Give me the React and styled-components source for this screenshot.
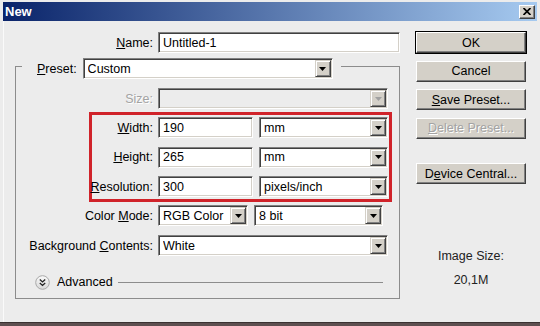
import React from "react";
import styled, { createGlobalStyle } from "styled-components";

const GlobalStyle = createGlobalStyle`
  html, body {
    margin: 0;
    padding: 0;
    background: #ececec;
  }
  body {
    font-family: "Liberation Sans", Arial, sans-serif;
    font-size: 12.5px;
    color: #000;
  }
`;

const Window = styled.div`
  width: 540px;
  height: 326px;
  box-sizing: border-box;
  display: flex;
  flex-direction: column;
  padding: 2px 3px 0 3px;
  background: #ececec;
  overflow: hidden;
`;

const TitleBar = styled.div`
  height: 19px;
  flex: none;
  display: flex;
  align-items: center;
  justify-content: space-between;
  padding: 0 2px;
  background: linear-gradient(90deg, #0a246a 0%, #a6caf0 100%);
`;

const Title = styled.span`
  color: #fff;
  font-weight: bold;
  font-size: 13px;
`;

const CloseButton = styled.div`
  box-sizing: border-box;
  width: 16px;
  height: 14px;
  display: grid;
  place-items: center;
  background: #d4d0c8;
  border: 1px solid;
  border-color: #fff #404040 #404040 #fff;
  box-shadow: inset -1px -1px 0 #808080;
`;

const Body = styled.div`
  flex: 1;
  display: flex;
  padding: 11px 0 0 11px;
  border-left: 1px solid #fafafa;
`;

const FormColumn = styled.div`
  width: 385px;
  flex: none;
  display: flex;
  flex-direction: column;
`;

const Row = styled.div`
  display: flex;
  align-items: center;
  gap: 5px;
  height: 21px;
  margin-top: ${(p) => p.$mt || 0}px;
`;

const Fields = styled.div`
  display: flex;
  gap: 6px;
`;

const Label = styled.div`
  width: ${(p) => p.$w}px;
  flex: none;
  display: flex;
  justify-content: flex-end;
  white-space: nowrap;
  color: ${(p) => (p.$disabled ? "#a3a3a3" : "#000")};
  text-shadow: ${(p) => (p.$disabled ? "1px 1px 0 #fff" : "none")};
`;

const U = styled.span`
  text-decoration: underline;
  text-underline-offset: 1px;
`;

const FieldBox = styled.div`
  box-sizing: border-box;
  width: ${(p) => p.$w}px;
  height: 21px;
  flex: none;
  display: flex;
  align-items: center;
  padding: 1px 1px 1px 4px;
  background: ${(p) => (p.$disabled ? "#ececec" : "#fff")};
  border: 1px solid;
  border-color: #808080 #fff #fff #808080;
  box-shadow: inset 1px 1px 0 #404040, inset -1px -1px 0 #d4d0c8;
`;

const FieldText = styled.span`
  flex: 1;
  overflow: hidden;
  white-space: nowrap;
`;

const DropButton = styled.div`
  box-sizing: border-box;
  width: 16px;
  height: 17px;
  flex: none;
  display: grid;
  place-items: center;
  background: #d4d0c8;
  border: 1px solid;
  border-color: #d4d0c8 #404040 #404040 #d4d0c8;
  box-shadow: inset 1px 1px 0 #fff, inset -1px -1px 0 #808080;
`;

const Group = styled.fieldset`
  margin: 0;
  padding: 9px 10px 8px 0;
  min-width: 0;
  border: 1px solid #8c8c8c;
  display: flex;
  flex-direction: column;
`;

const Legend = styled.legend`
  margin-left: 6px;
  padding: 5px 8px 0 15px;
`;

const LegendInner = styled.div`
  display: flex;
  align-items: center;
  gap: 6px;
`;

const Highlight = styled.div`
  margin: 3px -3px 3px 73px;
  padding: 2px 0;
  border: 3px solid #d0232a;
  display: flex;
  flex-direction: column;
  gap: 8.5px;
`;

const AdvancedRow = styled.div`
  display: flex;
  align-items: center;
  height: 16px;
  gap: 7px;
  margin: 18px 6px 0 19px;
`;

const Rule = styled.div`
  flex: 1;
  height: 1px;
  margin-left: -2px;
  background: #8c8c8c;
`;

const ButtonColumn = styled.div`
  width: 110px;
  flex: none;
  margin-left: 16px;
  display: flex;
  flex-direction: column;
  gap: 7.5px;
`;

const Button = styled.div`
  box-sizing: border-box;
  height: 21px;
  margin-top: ${(p) => p.$mt || 0}px;
  display: flex;
  align-items: center;
  justify-content: center;
  white-space: nowrap;
  background: #d4d0c8;
  border: 1px solid;
  border-color: #fff #404040 #404040 #fff;
  box-shadow: ${(p) =>
    p.$default
      ? "0 0 0 1px #000, inset -1px -1px 0 #808080"
      : "inset -1px -1px 0 #808080"};
  color: ${(p) => (p.$disabled ? "#a3a3a3" : "#000")};
  text-shadow: ${(p) => (p.$disabled ? "1px 1px 0 #fff" : "none")};
`;

const ImageInfo = styled.div`
  margin-top: 57.5px;
  display: flex;
  flex-direction: column;
  align-items: center;
  gap: 9px;
  line-height: 15px;
  color: #222;
`;

const BottomStrip = styled.div`
  height: 4px;
  flex: none;
  margin: 0 -3px;
  background: linear-gradient(180deg, #3a3131 0, #3a3131 1px, #5e4f50 1px);
`;

function Arrow({ disabled }) {
  return (
    <svg width="7" height="4" viewBox="0 0 7 4">
      <polygon points="0,0 7,0 3.5,4" fill={disabled ? "#a0a0a0" : "#000"} />
    </svg>
  );
}

function Select({ w, value, disabled }) {
  return (
    <FieldBox $w={w} $disabled={disabled}>
      <FieldText>{value}</FieldText>
      <DropButton>
        <Arrow disabled={disabled} />
      </DropButton>
    </FieldBox>
  );
}

function TextInput({ w, value }) {
  return (
    <FieldBox $w={w}>
      <FieldText>{value}</FieldText>
    </FieldBox>
  );
}

function FieldLabel({ w, disabled, children }) {
  return (
    <Label $w={w} $disabled={disabled}>
      <span>{children}</span>
    </Label>
  );
}

function ExpandIcon() {
  return (
    <svg width="15" height="15" viewBox="0 0 15 15">
      <defs>
        <linearGradient id="adv" x1="0" y1="0" x2="0" y2="1">
          <stop offset="0" stopColor="#fafafa" />
          <stop offset="1" stopColor="#d8d8d8" />
        </linearGradient>
      </defs>
      <circle cx="7.5" cy="7.5" r="6.8" fill="url(#adv)" stroke="#a8a8a8" />
      <path
        d="M4.8 4.6 L7.5 7 L10.2 4.6 M4.8 8 L7.5 10.4 L10.2 8"
        fill="none"
        stroke="#222"
        strokeWidth="1.3"
      />
    </svg>
  );
}

function CloseGlyph() {
  return (
    <svg width="8" height="7" viewBox="0 0 8 7">
      <path d="M0.5 0 L7.5 7 M7.5 0 L0.5 7" stroke="#000" strokeWidth="1.7" />
    </svg>
  );
}

export default function App() {
  return (
    <>
      <GlobalStyle />
      <Window>
        <TitleBar>
          <Title>New</Title>
          <CloseButton>
            <CloseGlyph />
          </CloseButton>
        </TitleBar>
        <Body>
          <FormColumn>
            <Row>
              <FieldLabel w={138}>
                <U>N</U>ame:
              </FieldLabel>
              <TextInput w={242} value="Untitled-1" />
            </Row>
            <Group>
              <Legend>
                <LegendInner>
                  <span>
                    <U>P</U>reset:
                  </span>
                  <Select w={250} value="Custom" />
                </LegendInner>
              </Legend>
              <Row>
                <FieldLabel w={137} disabled>
                  Size:
                </FieldLabel>
                <Select w={230} value="" disabled />
              </Row>
              <Highlight>
                <Row>
                  <FieldLabel w={61}>
                    <U>W</U>idth:
                  </FieldLabel>
                  <Fields>
                    <TextInput w={95} value="190" />
                    <Select w={129} value="mm" />
                  </Fields>
                </Row>
                <Row>
                  <FieldLabel w={61}>
                    <U>H</U>eight:
                  </FieldLabel>
                  <Fields>
                    <TextInput w={95} value="265" />
                    <Select w={129} value="mm" />
                  </Fields>
                </Row>
                <Row>
                  <FieldLabel w={61}>
                    <U>R</U>esolution:
                  </FieldLabel>
                  <Fields>
                    <TextInput w={95} value="300" />
                    <Select w={129} value="pixels/inch" />
                  </Fields>
                </Row>
              </Highlight>
              <Row>
                <FieldLabel w={137}>
                  Color <U>M</U>ode:
                </FieldLabel>
                <Fields>
                  <Select w={90} value="RGB Color" />
                  <Select w={129} value="8 bit" />
                </Fields>
              </Row>
              <Row $mt={9}>
                <FieldLabel w={137}>
                  Background <U>C</U>ontents:
                </FieldLabel>
                <Select w={230} value="White" />
              </Row>
              <AdvancedRow>
                <ExpandIcon />
                <span>Advanced</span>
                <Rule />
              </AdvancedRow>
            </Group>
          </FormColumn>
          <ButtonColumn>
            <Button $default>OK</Button>
            <Button>Cancel</Button>
            <Button>
              <span>
                <U>S</U>ave Preset...
              </span>
            </Button>
            <Button $disabled>
              <span>
                <U>D</U>elete Preset...
              </span>
            </Button>
            <Button $mt={17}>
              <span>
                D<U>e</U>vice Central...
              </span>
            </Button>
            <ImageInfo>
              <span>Image Size:</span>
              <span>20,1M</span>
            </ImageInfo>
          </ButtonColumn>
        </Body>
        <BottomStrip />
      </Window>
    </>
  );
}
